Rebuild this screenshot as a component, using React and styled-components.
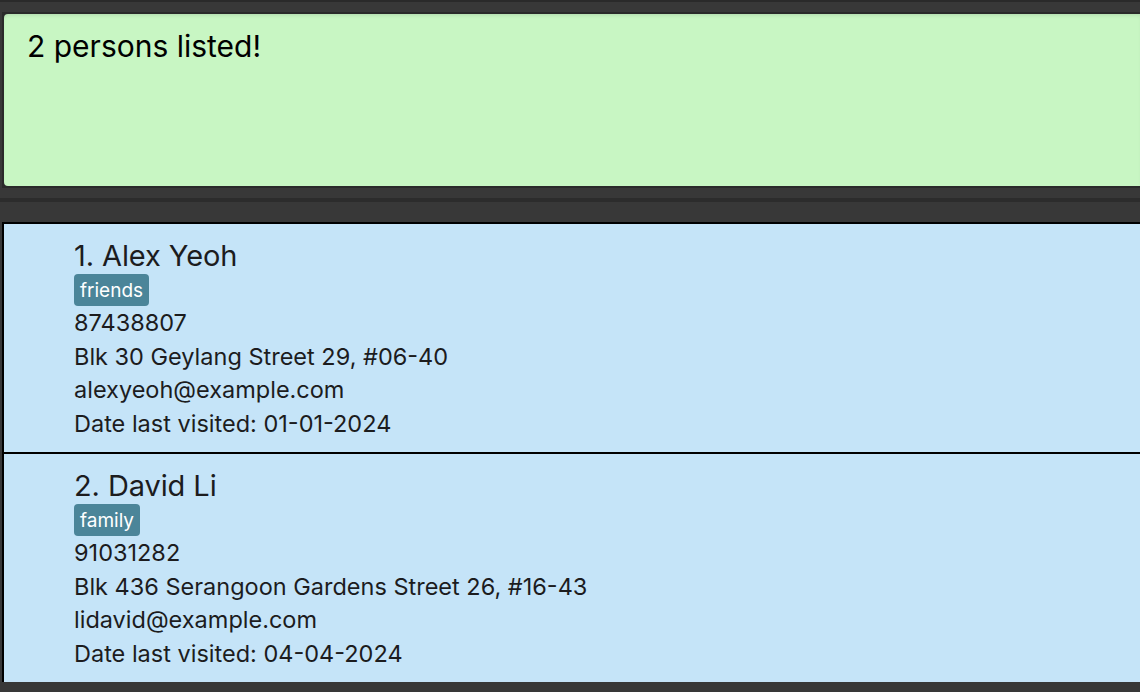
import styled, { createGlobalStyle } from "styled-components";

const GlobalStyle = createGlobalStyle`
  html, body {
    margin: 0;
    padding: 0;
    background: #383838;
    overflow: hidden;
  }
  body {
    font-family: Inter, "Open Sans", sans-serif;
  }
`;

const Window = styled.div`
  width: 1140px;
  height: 692px;
  display: flex;
  flex-direction: column;
  background: #383838;
  border-top: 2px solid #2a2a2a;
  box-sizing: border-box;
`;

const ResultPane = styled.div`
  padding: 10px 0 10px 2px;
  border-bottom: 4px solid #2c2c2c;
`;

const ResultFrame = styled.div`
  background: #2a2a2a;
  padding: 2px 0 2px 2px;
`;

const ResultBox = styled.div`
  height: 172px;
  box-sizing: border-box;
  background: #c8f6c3;
  border-radius: 4px 0 0 4px;
  box-shadow: inset 0 3px 4px -2px rgba(0, 0, 0, 0.12);
  padding: 14px 0 0 23px;
  font-size: 30px;
  line-height: 36px;
  color: #000;
`;

const ListPane = styled.div`
  flex: 1;
  padding: 20px 0 10px 2px;
  display: flex;
  flex-direction: column;
  min-height: 0;
`;

const List = styled.div`
  flex: 1;
  overflow: hidden;
  border-top: 2px solid #000;
  border-left: 2px solid #000;
  background: #c5e4f8;
`;

const Card = styled.div`
  box-sizing: border-box;
  padding: 14px 0 0 70px;
  border-top: ${(p) => (p.$first ? "none" : "2px solid #000")};
  height: ${(p) => (p.$first ? "228px" : "230px")};
  color: #1c1c1e;
`;

const Name = styled.div`
  font-size: 29px;
  line-height: 35px;
  letter-spacing: -0.1px;
`;

const Tags = styled.div`
  display: flex;
  gap: 6px;
  margin-top: 1px;
`;

const Tag = styled.span`
  height: 32px;
  box-sizing: border-box;
  padding: 0 6px;
  display: flex;
  align-items: center;
  background: #4b8599;
  color: #fff;
  border-radius: 4px;
  font-size: 19px;
`;

const Field = styled.div`
  font-size: 23.5px;
  line-height: 33.6px;
`;

const persons = [
  {
    name: "Alex Yeoh",
    tags: ["friends"],
    phone: "87438807",
    address: "Blk 30 Geylang Street 29, #06-40",
    email: "alexyeoh@example.com",
    visited: "01-01-2024",
  },
  {
    name: "David Li",
    tags: ["family"],
    phone: "91031282",
    address: "Blk 436 Serangoon Gardens Street 26, #16-43",
    email: "lidavid@example.com",
    visited: "04-04-2024",
  },
];

const App = () => {
  return (
    <>
      <GlobalStyle />
      <Window>
        <ResultPane>
          <ResultFrame>
            <ResultBox>2 persons listed!</ResultBox>
          </ResultFrame>
        </ResultPane>
        <ListPane>
          <List>
            {persons.map((p, i) => (
              <Card key={p.name} $first={i === 0}>
                <Name>
                  {i + 1}. {p.name}
                </Name>
                <Tags>
                  {p.tags.map((t) => (
                    <Tag key={t}>{t}</Tag>
                  ))}
                </Tags>
                <Field>{p.phone}</Field>
                <Field>{p.address}</Field>
                <Field>{p.email}</Field>
                <Field>Date last visited: {p.visited}</Field>
              </Card>
            ))}
          </List>
        </ListPane>
      </Window>
    </>
  );
};

export default App;
